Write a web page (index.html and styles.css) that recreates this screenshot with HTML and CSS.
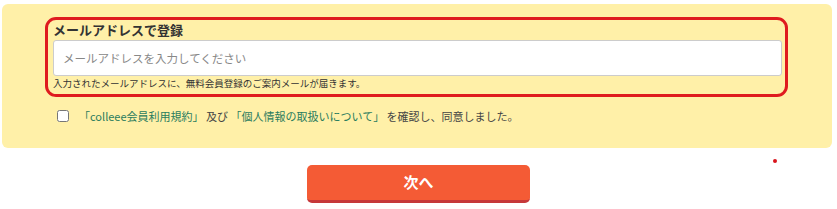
FILE: index.html
```html
<!DOCTYPE html>
<html lang="ja">

<head>
  <meta charset="UTF-8" />
  <meta name="viewport" content="width=device-width, initial-scale=1.0" />
  <title>会員登録</title>
  <link rel="stylesheet" href="styles.css">
</head>

<body>
  <div class="form_wrap">
    <!-- メールアドレス入力 -->
    <div class="reg_box">
      <div class="reg_title">メールアドレスで登録</div>
      <input type="text" class="reg_input" placeholder="メールアドレスを入力してください" />
      <p class="reg_note">入力されたメールアドレスに、無料会員登録のご案内メールが届きます。</p>
    </div>
    <!-- 規約同意 -->
    <label class="agree">
      <input type="checkbox" class="agree_check" />
      <span><a href="#">「colleee会員利用規約」</a> 及び <a href="#">「個人情報の取扱いについて」</a> を確認し、同意しました。</span>
    </label>
  </div>
  <!-- 次へボタン -->
  <button class="next_btn">次へ</button>
  <span class="dot"></span>
</body>

</html>
```
FILE: styles.css
```css
body,
p {
  margin: 0px;
  padding: 0px;
}

body {
  font-family: "Noto Sans CJK JP", "Noto Sans", sans-serif;
  color: #333;
  background: #fff;
  position: relative;
}

.form_wrap {
  width: 830px;
  height: 144px;
  box-sizing: border-box;
  margin: 4px 0 0 2px;
  padding: 13px 0 0 43px;
  background-color: #fff0a8;
  border-radius: 6px;
}

.reg_box {
  width: 743px;
  box-sizing: border-box;
  border: 3px solid #df1b1f;
  border-radius: 11px;
  padding: 1px 3px 3px 5px;
}

.reg_title {
  font-size: 13px;
  font-weight: bold;
  line-height: 18px;
  color: #333;
}

.reg_input {
  display: block;
  width: 100%;
  height: 36px;
  box-sizing: border-box;
  margin-top: 1px;
  padding: 0 9px;
  border: 1px solid #ccc;
  border-radius: 3px;
  font-family: inherit;
  font-size: 11.5px;
  outline: none;
}

.reg_input::placeholder {
  color: #888;
}

.reg_note {
  font-size: 9.5px;
  line-height: 15px;
  color: #333;
}

.agree {
  display: flex;
  align-items: center;
  margin: 10px 0 0 10px;
  font-size: 11px;
  line-height: 18px;
  color: #444;
  cursor: pointer;
}

.agree_check {
  width: 12px;
  height: 12px;
  margin: 0 10px 0 2px;
}

.agree a {
  color: #2a7c5e;
  text-decoration: none;
}

.next_btn {
  display: block;
  width: 223px;
  height: 38px;
  margin: 17px auto 0;
  padding: 0 0 3px;
  border: 0;
  border-bottom: 3px solid #c6383a;
  border-radius: 5px;
  background-color: #f45b35;
  color: #fff;
  font-family: inherit;
  font-size: 15px;
  font-weight: bold;
  cursor: pointer;
}

.dot {
  position: absolute;
  left: 773px;
  top: 159px;
  width: 4px;
  height: 4px;
  border-radius: 2px;
  background-color: #d9141c;
}
```
